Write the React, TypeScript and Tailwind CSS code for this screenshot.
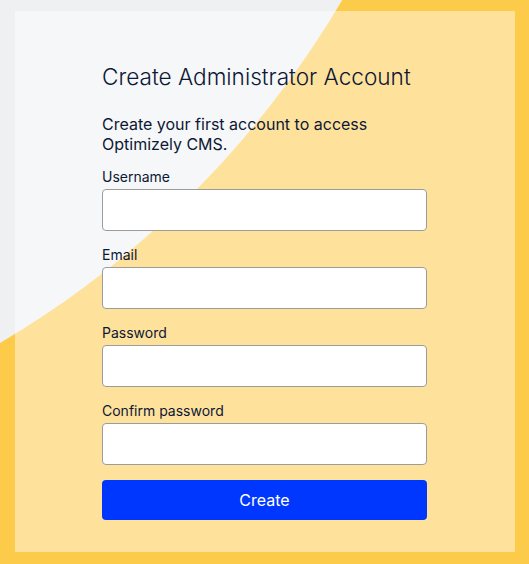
import React from 'react';

const fields = ['Username', 'Email', 'Password', 'Confirm password'];

function App() {
  return (
    <div className="relative min-h-screen w-full overflow-hidden bg-[#fdcb4a] font-['Inter',sans-serif]">
      {/* Background shape */}
      <svg className="absolute inset-0 h-full w-full" viewBox="0 0 529 564" preserveAspectRatio="none">
        <rect x="0" y="0" width="529" height="564" fill="#fdcb4a" />
        <circle cx="-496" cy="-494" r="973" fill="#eff0f2" />
      </svg>

      <div className="relative pt-[11px] pl-[15px]">
        <div className="w-[500px] bg-white/45 pt-[50px] pb-[32px]">
          <div className="ml-[87px] w-[325px] text-[#0d1736]">
            <h1 className="whitespace-nowrap text-[22.6px] leading-8 font-light">Create Administrator Account</h1>
            <p className="mt-[21px] text-[16px] leading-5">
              Create your first account to access Optimizely CMS.
            </p>

            <form className="mt-[13px]" onSubmit={(e) => e.preventDefault()}>
              {fields.map((label, i) => (
                <div key={label} className={i === 0 ? '' : 'mt-[14px]'}>
                  <label className="block text-[14px] leading-5">{label}</label>
                  <input
                    type={label.toLowerCase().includes('password') ? 'password' : 'text'}
                    className="mt-[2px] block h-[42px] w-full rounded-[4px] border border-[#9c9c9c] bg-white px-3 outline-none"
                  />
                </div>
              ))}
              <button
                type="submit"
                className="mt-[15px] h-10 w-full rounded-[4px] bg-[#0037ff] text-[16px] text-white"
              >
                Create
              </button>
            </form>
          </div>
        </div>
      </div>
    </div>
  );
}

export default App;
